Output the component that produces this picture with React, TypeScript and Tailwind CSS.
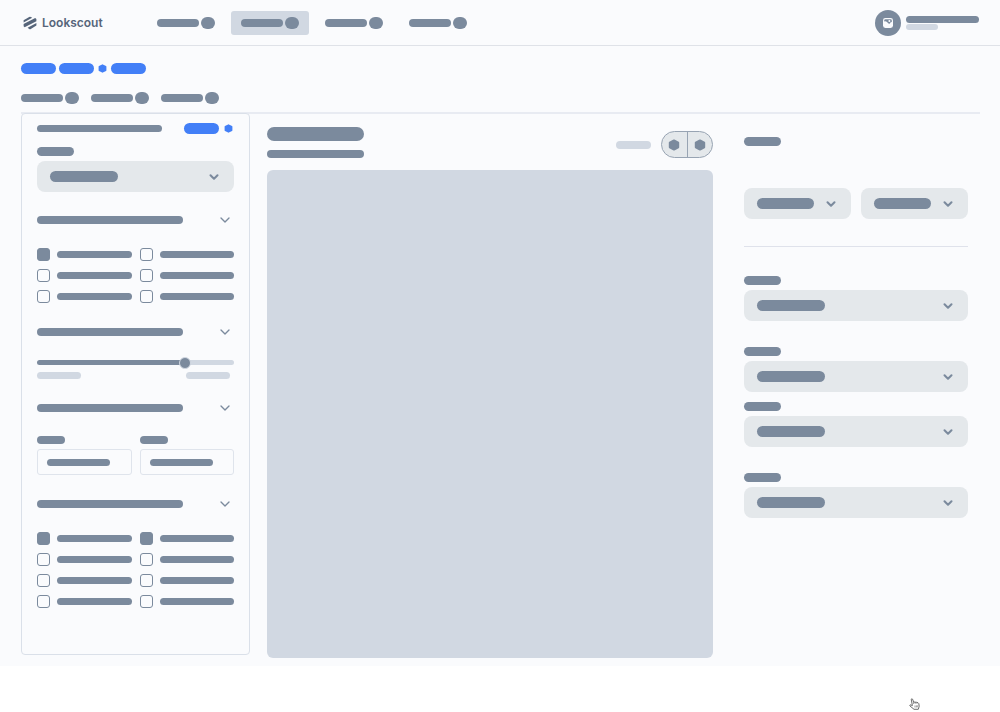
import React from 'react';
import { ChevronDown } from 'lucide-react';
import clsx from 'clsx';

const Bar = ({ className }: { className: string }) => (
  <span className={clsx('block shrink-0 rounded-full', className)} />
);

const Hexagon = ({ className }: { className: string }) => (
  <svg viewBox="0 0 12 12" className={clsx('shrink-0', className)} aria-hidden="true">
    <path
      d="M6 1.4 10.2 3.7V8.3L6 10.6 1.8 8.3V3.7Z"
      fill="currentColor"
      stroke="currentColor"
      strokeWidth="2"
      strokeLinejoin="round"
    />
  </svg>
);

const Logo = () => (
  <a href="#" className="flex items-center gap-[5px] text-[#56657a]">
    <svg viewBox="0 0 14 14" className="size-3.5" fill="currentColor" aria-hidden="true">
      <path d="M.6 4.2 6.2.9Q7 .5 7.8.9L9.2 1.7 .6 6.6Z" />
      <path d="M.6 8 12.2 1.9 13.4 3V5.2L1.6 11.3 .6 10.3Z" />
      <path d="M4.6 11.7 13.4 7V9.6L7.8 12.9Q7 13.4 6.2 12.9Z" />
    </svg>
    <span className="text-xs font-semibold">Lookscout</span>
  </a>
);

// Bar with a round badge behind it, used by the nav and by the tabs
const TabLabel = () => (
  <span className="flex items-center gap-0.5">
    <Bar className="h-2 w-[42px] bg-[#7b8a9d]" />
    <Bar className="h-3 w-3.5 bg-[#7b8a9d]" />
  </span>
);

const SelectBox = ({ name, barWidth = 'w-[68px]' }: { name: string; barWidth?: string }) => (
  <div className="grid w-full">
    <select
      id={name}
      aria-label={name}
      className="col-start-1 row-start-1 h-[31px] w-full appearance-none rounded-lg bg-[#e4e8eb]"
    />
    <div className="pointer-events-none col-start-1 row-start-1 flex items-center justify-between px-[13px] text-[#7b8a9d]">
      <Bar className={clsx('h-[11px] bg-[#7b8a9d]', barWidth)} />
      <ChevronDown size={14} strokeWidth={3.5} />
    </div>
  </div>
);

const SelectField = ({ name, className }: { name: string; className?: string }) => (
  <div className={clsx('flex flex-col gap-[5px]', className)}>
    <label htmlFor={name}>
      <Bar className="h-[9px] w-[37px] bg-[#7b8a9d]" />
    </label>
    <SelectBox name={name} />
  </div>
);

const Section = ({ className = 'mt-[23px]', children }: { className?: string; children: React.ReactNode }) => (
  <section className={className}>
    <button type="button" aria-label="Toggle section" className="flex h-3 w-full items-center justify-between pr-px text-[#7b8a9d]">
      <Bar className="h-2 w-[146px] bg-[#7b8a9d]" />
      <ChevronDown size={16} strokeWidth={2} />
    </button>
    <div className="mt-[22px]">{children}</div>
  </section>
);

const CheckGrid = ({ checks }: { checks: boolean[] }) => (
  <div className="grid grid-cols-2 gap-2">
    {checks.map((checked, i) => (
      <label key={i} className="flex items-center gap-[7px]">
        <input
          type="checkbox"
          aria-label={`Option ${i + 1}`}
          defaultChecked={checked}
          className="size-[13px] shrink-0 appearance-none rounded-[3px] border border-[#7b8a9d] checked:bg-[#7b8a9d]"
        />
        <span className="h-[7px] flex-1 rounded-full bg-[#7b8a9d]" />
      </label>
    ))}
  </div>
);

const RangeInput = ({ name }: { name: string }) => (
  <div className="flex flex-col gap-[5px]">
    <label htmlFor={name}>
      <Bar className="h-2 w-7 bg-[#7b8a9d]" />
    </label>
    <div className="grid items-center">
      <input
        id={name}
        type="text"
        aria-label={name}
        className="col-start-1 row-start-1 h-[26px] w-full rounded-[3px] border border-[#dfe4ec] px-2 text-xs"
      />
      <Bar className="pointer-events-none col-start-1 row-start-1 ml-2.5 h-[7px] w-[63px] bg-[#7b8a9d]" />
    </div>
  </div>
);

const Header = () => (
  <header className="flex h-[46px] items-center border-b border-[#dfe2e8] pr-[21px] pl-[23px]">
    <Logo />
    <nav className="ml-11 flex gap-1.5">
      {[false, true, false, false].map((active, i) => (
        <a
          key={i}
          href="#"
          aria-label={`Page ${i + 1}`}
          className={clsx('flex h-6 items-center rounded-[3px] px-2.5', active && 'bg-[#d1d8e2]')}
        >
          <TabLabel />
        </a>
      ))}
    </nav>
    <div className="ml-auto flex items-center gap-[5px]">
      <span className="flex size-[26px] items-center justify-center rounded-full bg-[#7b8a9d]">
        <svg viewBox="0 0 10 10" className="size-2.5" aria-hidden="true">
          <rect width="10" height="10" rx="2.4" fill="#fafbfd" />
          <path d="M1.2 2.6Q1.2 1.3 2.5 1.3H7.5Q8.8 1.3 8.8 2.6V4.2Q7.6 3.8 7.2 5Q6.8 6.1 5.6 5.5Q4.9 5 4.3 4.3Q2.8 2.9 1.2 3.4Z" fill="#7b8a9d" />
          <circle cx="6.4" cy="2.9" r="1" fill="#fafbfd" />
        </svg>
      </span>
      <span className="flex flex-col gap-px">
        <Bar className="h-[7px] w-[73px] bg-[#7b8a9d]" />
        <Bar className="h-1.5 w-8 bg-[#d1d8e2]" />
      </span>
    </div>
  </header>
);

const Filters = () => (
  <aside className="-mt-px w-[229px] shrink-0 self-start rounded border border-[#dae0e9] bg-[#fafbfd] px-[15px] pt-[9px] pb-[46px]">
    <div className="flex h-[11px] items-center pr-px">
      <Bar className="h-[7px] w-[125px] bg-[#7b8a9d]" />
      <button type="button" aria-label="Reset" className="ml-auto flex items-center gap-[5px] text-[#427ff7]">
        <Bar className="h-[11px] w-[35px] bg-[#427ff7]" />
        <Hexagon className="size-[9px]" />
      </button>
    </div>
    <SelectField name="Category" className="mt-[13px]" />

    <Section className="mt-[22px]">
      <CheckGrid checks={[true, false, false, false, false, false]} />
    </Section>

    <Section>
      <input
        type="range"
        aria-label="Range"
        defaultValue={77}
        className="block h-[5px] w-full appearance-none rounded-full bg-linear-to-r from-[#7b8a9d] from-75% to-[#d1d8e2] to-75% [&::-webkit-slider-thumb]:size-3 [&::-webkit-slider-thumb]:appearance-none [&::-webkit-slider-thumb]:rounded-full [&::-webkit-slider-thumb]:border [&::-webkit-slider-thumb]:border-[#d1d8e2] [&::-webkit-slider-thumb]:bg-[#7b8a9d]"
      />
      <div className="mt-[7px] flex justify-between pr-1">
        <Bar className="h-[7px] w-11 bg-[#d1d8e2]" />
        <Bar className="h-[7px] w-11 bg-[#d1d8e2]" />
      </div>
    </Section>

    <Section>
      <div className="grid grid-cols-2 gap-2">
        <RangeInput name="Minimum" />
        <RangeInput name="Maximum" />
      </div>
    </Section>

    <Section>
      <CheckGrid checks={[true, true, false, false, false, false, false, false]} />
    </Section>
  </aside>
);

const Preview = () => (
  <section className="min-w-0 flex-1 pt-[13px]">
    <div className="flex items-end">
      <div className="flex flex-col gap-[9px]">
        <Bar className="h-3.5 w-[97px] bg-[#7b8a9d]" />
        <Bar className="h-2 w-[97px] bg-[#7b8a9d]" />
      </div>
      <div className="ml-auto flex items-center gap-2.5">
        <Bar className="h-2 w-[35px] bg-[#d1d8e2]" />
        <div className="flex h-[27px] w-[52px] divide-x divide-[#98a4b3] rounded-full border border-[#98a4b3] bg-[#e4e8eb] text-[#7b8a9d]">
          <button type="button" aria-label="Previous" className="flex flex-1 items-center justify-center">
            <Hexagon className="size-3" />
          </button>
          <button type="button" aria-label="Next" className="flex flex-1 items-center justify-center">
            <Hexagon className="size-3" />
          </button>
        </div>
      </div>
    </div>
    <div className="mt-3 h-[488px] rounded-md bg-[#d1d8e2]" />
  </section>
);

const Settings = () => (
  <section className="mr-3 ml-3.5 w-56 shrink-0 pt-[23px]">
    <Bar className="h-[9px] w-[37px] bg-[#7b8a9d]" />
    <div className="mt-[42px] grid grid-cols-2 gap-2.5">
      <SelectBox name="Width" barWidth="w-[57px]" />
      <SelectBox name="Height" barWidth="w-[57px]" />
    </div>
    <hr className="mt-[27px] border-[#dfe2eb]" />
    <SelectField name="Style" className="mt-[29px]" />
    <SelectField name="Format" className="mt-[26px]" />
    <SelectField name="Quality" className="mt-2.5" />
    <SelectField name="Layout" className="mt-[26px]" />
  </section>
);

export default function App() {
  return (
    <div className="font-[Inter,sans-serif]">
      <div className="bg-[#fafbfd] pb-2">
        <Header />
        <main className="pr-5 pl-[21px]">
          <div className="flex items-center gap-[3px] pt-[17px] text-[#427ff7]">
            <Bar className="h-[11px] w-[35px] bg-[#427ff7]" />
            <Bar className="h-[11px] w-[35px] bg-[#427ff7]" />
            <Hexagon className="mx-px size-[9px]" />
            <Bar className="h-[11px] w-[35px] bg-[#427ff7]" />
          </div>
          <div className="mt-[18px] mb-2 flex gap-3">
            {[1, 2, 3].map((tab) => (
              <button key={tab} type="button" aria-label={`Tab ${tab}`}>
                <TabLabel />
              </button>
            ))}
          </div>
          <div className="flex gap-[17px] border-t-2 border-[#e8ebf2]">
            <Filters />
            <Preview />
            <Settings />
          </div>
        </main>
      </div>

      {/* Pointer */}
      <div className="flex justify-end pt-8 pr-20">
        <svg viewBox="0 0 11 12" className="h-3 w-[11px]" fill="#fff" stroke="#5d5d5d" strokeWidth="0.9" strokeLinejoin="round" aria-hidden="true">
          <path d="M2.2 1.2Q2.9.3 3.6 1.2L4.6 4 7.6 4.3Q9.4 4.6 9.8 5.6L10.2 8.3 9.3 11.3H5L1 8Q.4 6.9 1.5 6.8L3.4 7.6Z" />
          <path d="M6 7.5V9.5M7.4 7.4V9.4M8.7 7.3V9.3M4.6 4V6M6.2 4.2V5.8M7.9 4.4V5.8" strokeWidth="0.6" />
        </svg>
      </div>
    </div>
  );
}
